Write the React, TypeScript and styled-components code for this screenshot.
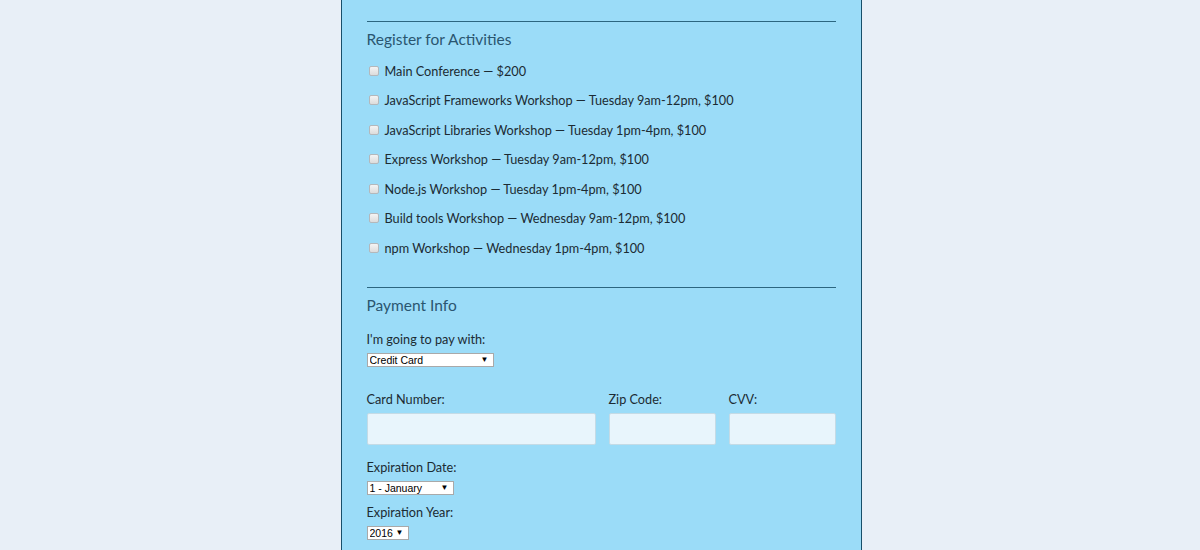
import React from 'react'
import styled, { createGlobalStyle } from 'styled-components'

const GlobalStyle = createGlobalStyle`
  html, body {
    margin: 0;
    padding: 0;
    background: #e8eff7;
    font-family: Lato, "Noto Sans", sans-serif;
    color: #1c2b33;
  }
`

const Page = styled.div`
  display: flex;
  justify-content: center;
  padding-left: 2px;
  height: 550px;
  overflow: hidden;
`

const Form = styled.form`
  width: 521px;
  box-sizing: border-box;
  background: #9bdcf8;
  border-left: 1px solid #184f6a;
  border-right: 1px solid #184f6a;
  padding: 21px 25px 0;
`

const Section = styled.fieldset`
  border: 0;
  border-top: 1px solid #2c6680;
  margin: 0;
  padding: 0;
`

const Legend = styled.h3`
  margin: 0;
  padding: 7px 0 0;
  font-size: 15.5px;
  font-weight: 400;
  color: #2a5670;
  line-height: 20px;
`

const Activities = styled.div`
  display: flex;
  flex-direction: column;
  padding-top: 7px;
  padding-bottom: 24px;
`

const ActivityRow = styled.label`
  display: flex;
  align-items: center;
  gap: 3px;
  height: 29.5px;
  font-size: 12.7px;
  padding-left: 2px;
`

const Check = styled.input.attrs({ type: 'checkbox' })`
  appearance: none;
  width: 10px;
  height: 10px;
  margin: 0 3px 0 0;
  border: 1px solid #b4b8bb;
  border-radius: 2px;
  background: linear-gradient(#f4f4f4, #dcdcdc);
  position: relative;
  top: 0;
`

const FieldLabel = styled.label<{ $mt?: number }>`
  display: block;
  font-size: 12.7px;
  line-height: 16px;
  margin-top: ${p => p.$mt ?? 0}px;
`

const SelectWrap = styled.span<{ $w: number }>`
  position: relative;
  display: inline-block;
  width: ${p => p.$w}px;
  &::after {
    content: '▼';
    position: absolute;
    right: 5px;
    top: 2px;
    font-size: 8px;
    color: #000;
    pointer-events: none;
    font-family: "Liberation Sans", sans-serif;
  }
`

const Select = styled.select`
  appearance: none;
  width: 100%;
  height: 14px;
  box-sizing: border-box;
  border: 1px solid #a9a9a9;
  background: #fff;
  font-family: "Liberation Sans", Arial, sans-serif;
  font-size: 10.5px;
  line-height: 12px;
  padding: 0 0 0 2px;
  color: #000;
  border-radius: 0;
  display: block;
`

const PaySection = styled.div`
  padding-top: 16px;
  display: flex;
  flex-direction: column;
  gap: 6px;
`

const CardRow = styled.div`
  display: grid;
  grid-template-columns: 229px 107px 107px;
  column-gap: 13px;
  margin-top: 24px;
`

const Field = styled.div`
  display: flex;
  flex-direction: column;
  gap: 6px;
`

const TextInput = styled.input`
  height: 32px;
  box-sizing: border-box;
  background: #e8f5fc;
  border: 1px solid #c4dbe6;
  border-radius: 2px;
  width: 100%;
  margin: 0;
`

const ExpBlock = styled.div`
  display: flex;
  flex-direction: column;
  gap: 6px;
  margin-top: 14px;
`

const activities = [
  'Main Conference — $200',
  'JavaScript Frameworks Workshop — Tuesday 9am-12pm, $100',
  'JavaScript Libraries Workshop — Tuesday 1pm-4pm, $100',
  'Express Workshop — Tuesday 9am-12pm, $100',
  'Node.js Workshop — Tuesday 1pm-4pm, $100',
  'Build tools Workshop — Wednesday 9am-12pm, $100',
  'npm Workshop — Wednesday 1pm-4pm, $100',
]

export default function App() {
  return (
    <>
      <GlobalStyle />
      <Page>
        <Form>
          <Section>
            <Legend>Register for Activities</Legend>
            <Activities>
              {activities.map(a => (
                <ActivityRow key={a}>
                  <Check />
                  {a}
                </ActivityRow>
              ))}
            </Activities>
          </Section>
          <Section>
            <Legend>Payment Info</Legend>
            <PaySection>
              <FieldLabel>I'm going to pay with:</FieldLabel>
              <SelectWrap $w={127}>
                <Select defaultValue="credit">
                  <option value="credit">Credit Card</option>
                  <option value="paypal">PayPal</option>
                  <option value="bitcoin">Bitcoin</option>
                </Select>
              </SelectWrap>
            </PaySection>
            <CardRow>
              <Field>
                <FieldLabel>Card Number:</FieldLabel>
                <TextInput />
              </Field>
              <Field>
                <FieldLabel>Zip Code:</FieldLabel>
                <TextInput />
              </Field>
              <Field>
                <FieldLabel>CVV:</FieldLabel>
                <TextInput />
              </Field>
            </CardRow>
            <ExpBlock>
              <FieldLabel>Expiration Date:</FieldLabel>
              <SelectWrap $w={87}>
                <Select defaultValue="1">
                  <option value="1">1 - January</option>
                </Select>
              </SelectWrap>
              <FieldLabel $mt={3}>Expiration Year:</FieldLabel>
              <SelectWrap $w={42}>
                <Select defaultValue="2016">
                  <option value="2016">2016</option>
                </Select>
              </SelectWrap>
            </ExpBlock>
          </Section>
        </Form>
      </Page>
    </>
  )
}
